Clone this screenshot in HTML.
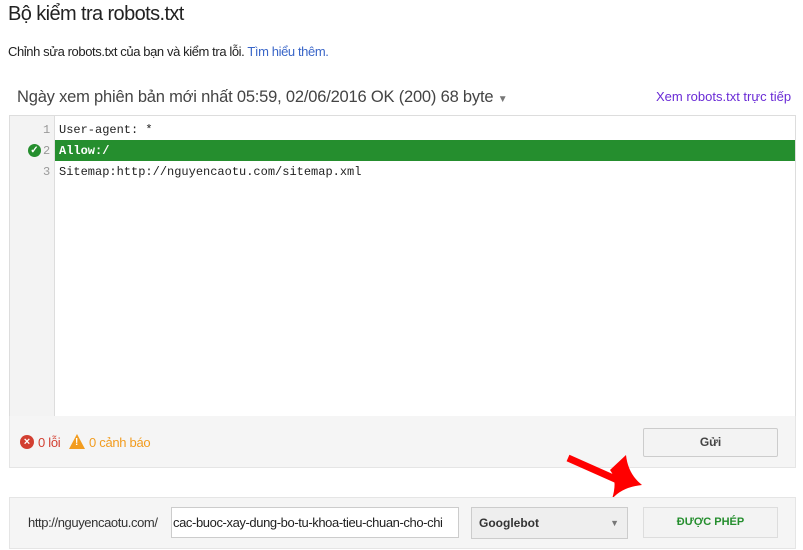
<!DOCTYPE html>
<html><head><meta charset="utf-8"><style>
body{margin:0;width:803px;height:550px;background:#fff;font-family:"Liberation Sans",Arial,sans-serif;position:relative;overflow:hidden;color:#222}
.a{position:absolute;white-space:nowrap}
.mono{font-family:"Liberation Mono",monospace;font-size:12px}
</style></head><body>
<div class="a" style="left:8px;top:3px;font-size:20px;letter-spacing:-0.6px;color:#222">Bộ kiểm tra robots.txt</div>
<div class="a" style="left:8px;top:44px;font-size:13px;letter-spacing:-0.4px">Chỉnh sửa robots.txt của bạn và kiểm tra lỗi. <span style="color:#3a66c8">Tìm hiểu thêm.</span></div>
<div class="a" style="left:17px;top:88px;font-size:16.5px;letter-spacing:-0.2px;color:#444">Ngày xem phiên bản mới nhất 05:59, 02/06/2016 OK (200) 68 byte <span style="font-size:10px;color:#777">▼</span></div>
<div class="a" style="left:656px;top:89px;font-size:13px;letter-spacing:0px;color:#6a2bd6">Xem robots.txt trực tiếp</div>

<div class="a" style="left:9px;top:115px;width:785px;height:301px;border:1px solid #ddd;background:#fff"></div>
<div class="a" style="left:10px;top:116px;width:44px;height:300px;background:#f3f3f3;border-right:1px solid #ddd"></div>
<div class="a" style="left:55px;top:140px;width:740px;height:21px;background:#258e2e"></div>
<div class="a mono" style="left:43px;top:123px;color:#999">1</div>
<div class="a mono" style="left:43px;top:144px;color:#999">2</div>
<div class="a mono" style="left:43px;top:165px;color:#999">3</div>
<div class="a" style="left:28px;top:144px;width:13px;height:13px;border-radius:50%;background:#258e2e;color:#fff;font-size:10px;line-height:13px;text-align:center;font-weight:bold">✓</div>
<div class="a mono" style="left:59px;top:123px;color:#222">User-agent: *</div>
<div class="a mono" style="left:59px;top:144px;color:#fff;font-weight:bold">Allow:/</div>
<div class="a mono" style="left:59px;top:165px;color:#222">Sitemap:http://nguyencaotu.com/sitemap.xml</div>

<div class="a" style="left:9px;top:416px;width:785px;height:51px;background:#f5f5f5;border:1px solid #e5e5e5;border-top:none"></div>
<div class="a" style="left:20px;top:435px;width:14px;height:14px;border-radius:50%;background:#d23f31;color:#fff;font-size:11px;line-height:14px;text-align:center;font-weight:bold">×</div>
<div class="a" style="left:38px;top:435px;font-size:13px;color:#d23f31;letter-spacing:-0.3px">0 lỗi</div>
<div class="a" style="left:69px;top:434px;width:0;height:0;border-left:8px solid transparent;border-right:8px solid transparent;border-bottom:15px solid #f29c1f"></div>
<div class="a" style="left:75px;top:437px;font-size:10px;color:#fff;font-weight:bold">!</div>
<div class="a" style="left:89px;top:435px;font-size:13px;color:#f29c1f;letter-spacing:-0.3px">0 cảnh báo</div>
<div class="a" style="left:643px;top:428px;width:133px;height:27px;background:#f3f3f3;border:1px solid #ccc;border-radius:2px;font-size:12px;line-height:27px;text-align:center;font-weight:bold;color:#444">Gửi</div>

<svg class="a" style="left:560px;top:450px" width="100" height="55">
<line x1="8" y1="8" x2="62" y2="32" stroke="#f00" stroke-width="7"/>
<path d="M66,5 Q68,24 82,35 Q62,37 52,49 Q58,30 50,20 Z" fill="#f00"/>
</svg>

<div class="a" style="left:9px;top:497px;width:785px;height:50px;background:#f5f5f5;border:1px solid #e5e5e5"></div>
<div class="a" style="left:28px;top:515px;font-size:13px;letter-spacing:-0.4px;color:#333">http://nguyencaotu.com/</div>
<div class="a" style="left:171px;top:507px;width:285px;height:29px;background:#fff;border:1px solid #ccc;font-size:13px;line-height:29px;letter-spacing:-0.4px;overflow:hidden;padding-left:1px">cac-buoc-xay-dung-bo-tu-khoa-tieu-chuan-cho-chi</div>
<div class="a" style="left:471px;top:507px;width:155px;height:30px;background:#eee;border:1px solid #ccc;font-size:12px;line-height:30px;font-weight:bold;color:#333;text-indent:7px">Googlebot<span style="position:absolute;right:8px;font-size:9px;color:#777">▼</span></div>
<div class="a" style="left:643px;top:507px;width:133px;height:29px;background:#f3f3f3;border:1px solid #ddd;font-size:11px;line-height:29px;text-align:center;font-weight:bold;color:#258e2e">ĐƯỢC PHÉP</div>
</body></html>
